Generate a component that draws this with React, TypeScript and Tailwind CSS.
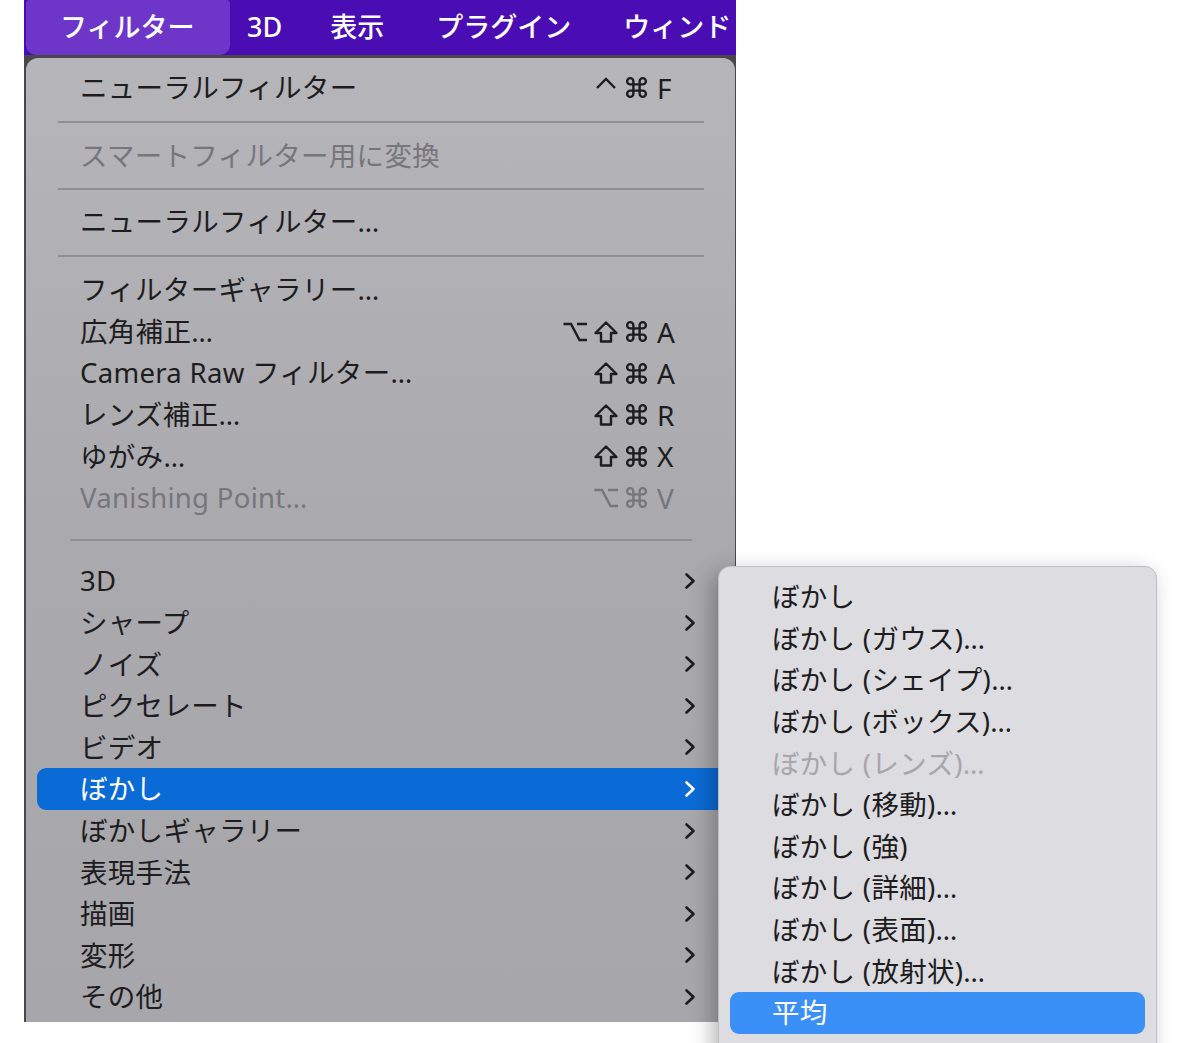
import React from 'react'

type Item =
  | { kind: 'item'; label: string; keys?: string[]; disabled?: boolean; sub?: boolean; active?: boolean }
  | { kind: 'sep'; h: string; inset: string }

const mainItems: Item[] = [
  { kind: 'item', label: 'ニューラルフィルター', keys: ['ctrl', 'cmd', 'F'] },
  { kind: 'sep', h: 'h-[26.4px]', inset: 'ml-[21px] mr-[20px]' },
  { kind: 'item', label: 'スマートフィルター用に変換', disabled: true },
  { kind: 'sep', h: 'h-[24.4px]', inset: 'ml-[21px] mr-[20px]' },
  { kind: 'item', label: 'ニューラルフィルター…' },
  { kind: 'sep', h: 'h-[26.4px]', inset: 'ml-[21px] mr-[20px]' },
  { kind: 'item', label: 'フィルターギャラリー…' },
  { kind: 'item', label: '広角補正…', keys: ['opt', 'shift', 'cmd', 'A'] },
  { kind: 'item', label: 'Camera Raw フィルター…', keys: ['shift', 'cmd', 'A'] },
  { kind: 'item', label: 'レンズ補正…', keys: ['shift', 'cmd', 'R'] },
  { kind: 'item', label: 'ゆがみ…', keys: ['shift', 'cmd', 'X'] },
  { kind: 'item', label: 'Vanishing Point…', keys: ['opt', 'cmd', 'V'], disabled: true },
  { kind: 'sep', h: 'h-[41.6px]', inset: 'ml-[33px] mr-[32px]' },
  { kind: 'item', label: '3D', sub: true },
  { kind: 'item', label: 'シャープ', sub: true },
  { kind: 'item', label: 'ノイズ', sub: true },
  { kind: 'item', label: 'ピクセレート', sub: true },
  { kind: 'item', label: 'ビデオ', sub: true },
  { kind: 'item', label: 'ぼかし', sub: true, active: true },
  { kind: 'item', label: 'ぼかしギャラリー', sub: true },
  { kind: 'item', label: '表現手法', sub: true },
  { kind: 'item', label: '描画', sub: true },
  { kind: 'item', label: '変形', sub: true },
  { kind: 'item', label: 'その他', sub: true },
]

const blurItems = [
  { label: 'ぼかし' },
  { label: 'ぼかし (ガウス)…' },
  { label: 'ぼかし (シェイプ)…' },
  { label: 'ぼかし (ボックス)…' },
  { label: 'ぼかし (レンズ)…', disabled: true },
  { label: 'ぼかし (移動)…' },
  { label: 'ぼかし (強)' },
  { label: 'ぼかし (詳細)…' },
  { label: 'ぼかし (表面)…' },
  { label: 'ぼかし (放射状)…' },
  { label: '平均', active: true },
]

function Chevron({ white }: { white?: boolean }) {
  return (
    <svg width="12" height="18" viewBox="0 0 12 18" className={white ? 'text-white' : 'text-[#1d1d1f]'}>
      <polyline
        points="2.5,2.5 9.5,9 2.5,15.5"
        fill="none"
        stroke="currentColor"
        strokeWidth="2.6"
        strokeLinecap="round"
        strokeLinejoin="round"
      />
    </svg>
  )
}

// modifier key glyphs drawn as small svgs
function KeyGlyph({ k }: { k: string }) {
  const common = { fill: 'none', stroke: 'currentColor', strokeWidth: 2.4 }
  if (k === 'cmd')
    return (
      <svg width="25" height="25" viewBox="0 0 24 24">
        <path
          {...common}
          strokeWidth={2.3}
          d="M15 6v12a3 3 0 1 0 3-3H6a3 3 0 1 0 3 3V6a3 3 0 1 0-3 3h12a3 3 0 1 0-3-3"
        />
      </svg>
    )
  if (k === 'shift')
    return (
      <svg width="26" height="24" viewBox="0 0 26 24">
        <path {...common} strokeLinejoin="round" d="M13 2.5 L23.5 13 H18 V21.5 H8 V13 H2.5 Z" />
      </svg>
    )
  if (k === 'opt')
    return (
      <svg width="26" height="24" viewBox="0 0 26 24">
        <path {...common} d="M1.5 4 H9 L17.5 20 H25 M15 4 H25" />
      </svg>
    )
  return (
    <svg width="24" height="24" viewBox="0 0 24 24">
      <polyline {...common} points="3,12 12,3 21,12" />
    </svg>
  )
}

function Keys({ keys, disabled }: { keys: string[]; disabled?: boolean }) {
  return (
    <div className={`flex items-center ${disabled ? 'text-[#77767b]' : 'text-[#1d1d1f]'}`}>
      {keys.map((k, i) =>
        i === keys.length - 1 ? (
          <span key={i} className="ml-[5px] w-[21px] text-left font-['Noto_Sans',sans-serif] text-[28px] leading-none">
            {k}
          </span>
        ) : (
          <span key={i} className="flex w-[31px] justify-center">
            <KeyGlyph k={k} />
          </span>
        )
      )}
    </div>
  )
}

function MainMenu() {
  return (
    <div className="h-[964px] rounded-t-[12px] bg-gradient-to-b from-[#b6b5b9] via-[#aaa9ad] to-[#a7a6aa] px-[11px] pt-[9.2px]">
      {mainItems.map((it, i) => {
        if (it.kind === 'sep') {
          return (
            <div key={i} className={`flex items-center ${it.h}`}>
              <div className={`h-[2px] flex-1 bg-[#908f93] ${it.inset}`} />
            </div>
          )
        }
        const color = it.active ? 'text-white' : it.disabled ? 'text-[#77767b]' : 'text-[#1d1d1f]'
        return (
          <div
            key={i}
            className={`flex h-[41.6px] items-center justify-between pl-[43px] ${it.sub ? 'pr-[28px]' : 'pr-[46px]'} ${
              it.active ? 'rounded-l-[9px] bg-[#0b6bd6]' : ''
            }`}
          >
            <span className={`text-[27.5px] leading-none tracking-[0.3px] ${color}`}>{it.label}</span>
            {it.keys && <Keys keys={it.keys} disabled={it.disabled} />}
            {it.sub && <Chevron white={it.active} />}
          </div>
        )
      })}
    </div>
  )
}

function BlurMenu() {
  return (
    <div className="absolute left-[718px] top-[566px] h-[500px] w-[439px] rounded-[12px] border border-[#bfbec2] bg-[#dddce0] pt-[9.2px] shadow-[-6px_6px_22px_rgba(0,0,0,0.28)]">
      {blurItems.map((it) => (
        <div
          key={it.label}
          className={`mx-[11px] flex h-[41.6px] items-center pl-[42px] ${it.active ? 'rounded-[9px] bg-[#3a90f6]' : ''}`}
        >
          <span
            className={`text-[27.5px] leading-none tracking-[0.3px] ${
              it.active ? 'text-white' : it.disabled ? 'text-[#a7a6aa]' : 'text-[#1d1d1f]'
            }`}
          >
            {it.label}
          </span>
        </div>
      ))}
    </div>
  )
}

export default function App() {
  return (
    <div className="relative h-[1043px] w-[1200px] overflow-hidden bg-white font-['Noto_Sans','Noto_Sans_CJK_JP',sans-serif]">
      <div className="ml-[24px] w-[712px]">
        <div className="flex h-[55px] items-stretch overflow-hidden whitespace-nowrap bg-[#4a0db4] text-[27px] font-medium text-white">
          <div className="ml-[2px] flex w-[204px] shrink-0 items-center rounded-b-[10px] rounded-t-[4px] bg-[#6d36c8] pl-[34px]">
            フィルター
          </div>
          <div className="ml-[17px] flex shrink-0 items-center">3D</div>
          <div className="ml-[48px] flex shrink-0 items-center">表示</div>
          <div className="ml-[52px] flex shrink-0 items-center">プラグイン</div>
          <div className="ml-[52px] flex shrink-0 items-center">ウィンド</div>
        </div>
        <div className="bg-[#48484a] pl-[2px] pr-[1px] pt-[3px]">
          <MainMenu />
        </div>
      </div>
      <BlurMenu />
    </div>
  )
}
